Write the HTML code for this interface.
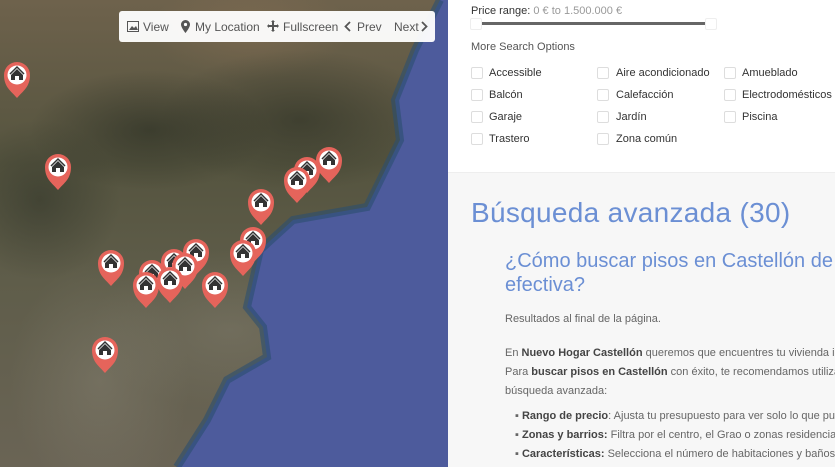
<!DOCTYPE html>
<html><head><meta charset="utf-8"><style>
*{margin:0;padding:0;box-sizing:border-box}
body{width:835px;height:467px;overflow:hidden;position:relative;font-family:"Liberation Sans",sans-serif;background:#fff}
#map{position:absolute;left:0;top:0;width:448px;height:467px;overflow:hidden;background:
radial-gradient(ellipse 120px 60px at 150px 130px,rgba(35,40,30,.55),transparent),
radial-gradient(ellipse 140px 70px at 300px 120px,rgba(35,40,30,.5),transparent),
radial-gradient(ellipse 100px 50px at 250px 30px,rgba(150,120,90,.35),transparent),
radial-gradient(ellipse 140px 80px at 230px 330px,rgba(140,135,120,.35),transparent),
radial-gradient(ellipse 90px 120px at 100px 380px,rgba(150,145,130,.3),transparent),
radial-gradient(ellipse 80px 80px at 40px 200px,rgba(40,45,35,.45),transparent),
linear-gradient(180deg,#6e624c 0%,#55543f 35%,#5f5d4a 60%,#6a6455 100%)}
.bar{position:absolute;left:119px;top:11px;width:316px;height:31px;background:rgba(255,255,255,.95);border-radius:3px;font-size:12px;color:#555}
.bar span{position:absolute;top:9px}
#right{position:absolute;left:448px;top:0;width:387px;height:467px}
.cb{position:absolute;width:12px;height:12px;border:1px solid #ddd;border-radius:2px;background:#fff}
.lb{position:absolute;font-size:11px;color:#333}
#low{position:absolute;left:0;top:172px;width:387px;height:295px;background:#f7f7f7;border-top:1px solid #eee}
p.t{position:absolute;font-size:11px;color:#666;white-space:nowrap}
p.t b{color:#444}
</style></head><body>
<div id="map">
<svg width="448" height="467" style="position:absolute;left:0;top:0">
<path d="M440 0 L415 50 L395 100 L400 140 L367 207 L293 220 L260 250 L247 307 L263 327 L267 357 L227 380 L207 420 L177 467 L448 467 L448 0Z" fill="#4d5b9c"/>
<path d="M440 0 L415 50 L395 100 L400 140 L367 207 L293 220 L260 250 L247 307 L263 327 L267 357 L227 380 L207 420 L177 467" fill="none" stroke="#2c4e70" stroke-width="8" opacity=".6"/>
</svg>
<div class="bar">
<svg style="position:absolute;left:8px;top:10px" width="12" height="11"><rect x=".5" y=".5" width="11" height="10" fill="none" stroke="#555"/><path d="M2 9l3-4 2 2 2-2 2 4z" fill="#555"/></svg><span style="left:24px">View</span>
<svg style="position:absolute;left:62px;top:9px" width="9" height="13"><path d="M4.5 0a4.5 4.5 0 0 1 4.5 4.5c0 3-4.5 8.5-4.5 8.5S0 7.5 0 4.5A4.5 4.5 0 0 1 4.5 0z" fill="#555"/><circle cx="4.5" cy="4.5" r="1.6" fill="#fff"/></svg><span style="left:76px">My Location</span>
<svg style="position:absolute;left:148px;top:9px" width="12" height="12"><path d="M6 0l2 2H7v3h3V4l2 2-2 2V7H7v3h1l-2 2-2-2h1V7H2v1L0 6l2-2v1h3V2H4z" fill="#555"/></svg><span style="left:164px">Fullscreen</span>
<svg style="position:absolute;left:225px;top:10px" width="7" height="11"><path d="M6 1L1.5 5.5 6 10" fill="none" stroke="#555" stroke-width="1.8"/></svg><span style="left:238px">Prev</span>
<span style="left:275px">Next</span><svg style="position:absolute;left:302px;top:10px" width="7" height="11"><path d="M1 1l4.5 4.5L1 10" fill="none" stroke="#555" stroke-width="1.8"/></svg>
</div>
</div>
<svg width="448" height="467" style="position:absolute;left:0;top:0">
<defs><g id="p"><path d="M0 23 C-6 16 -13 12 -13 0 A13 13 0 0 1 13 0 C13 12 6 16 0 23Z" fill="#e5645b"/><circle r="9.5" fill="#fff"/><path d="M0 -6 L-6 0 L-6 5 L6 5 L6 0Z M-2 5 L-2 1 L2 1 L2 5Z" fill="#333" fill-rule="evenodd"/><path d="M-7 -1 L0 -8 L7 -1" fill="none" stroke="#333" stroke-width="1.5"/></g></defs>
<use href="#p" x="17" y="75"/>
<use href="#p" x="58" y="167"/>
<use href="#p" x="111" y="263"/>
<use href="#p" x="105" y="350"/>
<use href="#p" x="152" y="273"/>
<use href="#p" x="174" y="262"/>
<use href="#p" x="196" y="252"/>
<use href="#p" x="185" y="266"/>
<use href="#p" x="146" y="285"/>
<use href="#p" x="170" y="280"/>
<use href="#p" x="215" y="285"/>
<use href="#p" x="253" y="240"/>
<use href="#p" x="243" y="253"/>
<use href="#p" x="261" y="202"/>
<use href="#p" x="307" y="170"/>
<use href="#p" x="297" y="180"/>
<use href="#p" x="329" y="160"/>
</svg>
<div id="right">
<div style="position:absolute;left:23px;top:5px;font-size:11px;color:#333">Price range: <span style="color:#999">0 € to 1.500.000 €</span></div>
<div style="position:absolute;left:32px;top:22px;width:225px;height:3px;background:#666"></div>
<div class="cb" style="left:22px;top:18px;border-color:#eee"></div>
<div class="cb" style="left:257px;top:18px;border-color:#eee"></div>
<div style="position:absolute;left:23px;top:41px;font-size:11px;color:#555">More Search Options</div>
<div class="cb" style="left:23px;top:67px"></div><div class="lb" style="left:41px;top:67px">Accessible</div>
<div class="cb" style="left:149px;top:67px"></div><div class="lb" style="left:168px;top:67px">Aire acondicionado</div>
<div class="cb" style="left:276px;top:67px"></div><div class="lb" style="left:294px;top:67px">Amueblado</div>
<div class="cb" style="left:23px;top:89px"></div><div class="lb" style="left:41px;top:89px">Balcón</div>
<div class="cb" style="left:149px;top:89px"></div><div class="lb" style="left:168px;top:89px">Calefacción</div>
<div class="cb" style="left:276px;top:89px"></div><div class="lb" style="left:294px;top:89px">Electrodomésticos</div>
<div class="cb" style="left:23px;top:111px"></div><div class="lb" style="left:41px;top:111px">Garaje</div>
<div class="cb" style="left:149px;top:111px"></div><div class="lb" style="left:168px;top:111px">Jardín</div>
<div class="cb" style="left:276px;top:111px"></div><div class="lb" style="left:294px;top:111px">Piscina</div>
<div class="cb" style="left:23px;top:133px"></div><div class="lb" style="left:41px;top:133px">Trastero</div>
<div class="cb" style="left:149px;top:133px"></div><div class="lb" style="left:168px;top:133px">Zona común</div>
<div id="low">
<div style="position:absolute;left:23px;top:24px;font-size:28px;color:#6b8fd4;white-space:nowrap;letter-spacing:.3px">Búsqueda avanzada (30)</div>
<div style="position:absolute;left:57px;top:76px;font-size:20px;line-height:24px;color:#6b8fd4;white-space:nowrap">¿Cómo buscar pisos en Castellón de<br>efectiva?</div>
<p class="t" style="left:57px;top:140px">Resultados al final de la página.</p>
<p class="t" style="left:57px;top:171px;line-height:19px">En <b>Nuevo Hogar Castellón</b> queremos que encuentres tu vivienda ide<br>Para <b>buscar pisos en Castellón</b> con éxito, te recomendamos utilizar<br>búsqueda avanzada:</p>
<p class="t" style="left:67px;top:234px;line-height:19px">▪ <b>Rango de precio</b>: Ajusta tu presupuesto para ver solo lo que pue<br>▪ <b>Zonas y barrios:</b> Filtra por el centro, el Grao o zonas residenciale<br>▪ <b>Características:</b> Selecciona el número de habitaciones y baños</p>
</div>
</div>
</body></html>
